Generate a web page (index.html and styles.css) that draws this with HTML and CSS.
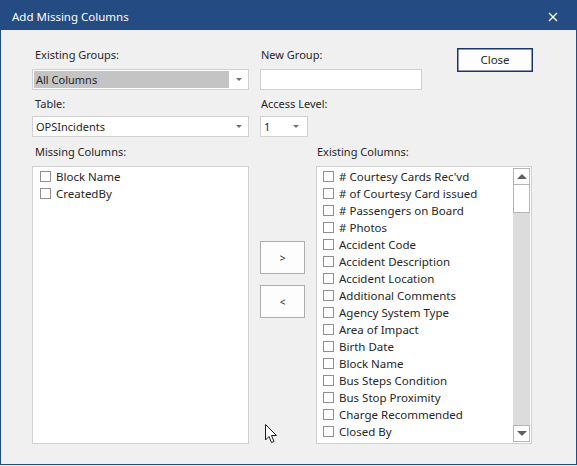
FILE: index.html
```html
<!DOCTYPE html>
<html>
<head>
<meta charset="utf-8">
<link rel="stylesheet" href="styles.css">
</head>
<body>
<div class="window">
  <div class="titlebar">
    <span class="title">Add Missing Columns</span>
    <svg class="close-x" width="10" height="10" viewBox="0 0 10 10"><path d="M1 1 L9 9 M9 1 L1 9" stroke="#fff" stroke-width="1.4" fill="none"/></svg>
  </div>
  <div class="content">
    <div class="top-row">
      <div class="col-left">
        <div class="label l1">Existing Groups:</div>
        <div class="combo">
          <div class="combo-sel">All Columns</div>
          <span class="arrow"></span>
        </div>
        <div class="label l2">Table:</div>
        <div class="combo combo2">
          <div class="combo-text">OPSIncidents</div>
          <span class="arrow"></span>
        </div>
      </div>
      <div class="col-mid">
        <div class="label l1">New Group:</div>
        <div class="textbox"></div>
        <div class="label l2">Access Level:</div>
        <div class="combo combo2 combo-small">
          <div class="combo-text">1</div>
          <span class="arrow"></span>
        </div>
      </div>
      <div class="col-right">
        <button class="close-btn">Close</button>
      </div>
    </div>
    <div class="lists-row">
      <div class="list-col">
        <div class="label l3">Missing Columns:</div>
        <div class="listbox left-list">
          <div class="items">
            <div class="item"><span class="cb"></span>Block Name</div>
            <div class="item"><span class="cb"></span>CreatedBy</div>
          </div>
        </div>
      </div>
      <div class="btn-col">
        <button class="move-btn">&gt;</button>
        <button class="move-btn">&lt;</button>
      </div>
      <div class="list-col right-col">
        <div class="label l3">Existing Columns:</div>
        <div class="listbox right-list">
          <div class="items">
            <div class="item"><span class="cb"></span># Courtesy Cards Rec'vd</div>
            <div class="item"><span class="cb"></span># of Courtesy Card issued</div>
            <div class="item"><span class="cb"></span># Passengers on Board</div>
            <div class="item"><span class="cb"></span># Photos</div>
            <div class="item"><span class="cb"></span>Accident Code</div>
            <div class="item"><span class="cb"></span>Accident Description</div>
            <div class="item"><span class="cb"></span>Accident Location</div>
            <div class="item"><span class="cb"></span>Additional Comments</div>
            <div class="item"><span class="cb"></span>Agency System Type</div>
            <div class="item"><span class="cb"></span>Area of Impact</div>
            <div class="item"><span class="cb"></span>Birth Date</div>
            <div class="item"><span class="cb"></span>Block Name</div>
            <div class="item"><span class="cb"></span>Bus Steps Condition</div>
            <div class="item"><span class="cb"></span>Bus Stop Proximity</div>
            <div class="item"><span class="cb"></span>Charge Recommended</div>
            <div class="item"><span class="cb"></span>Closed By</div>
          </div>
          <div class="scrollbar">
            <div class="sb-btn"><span class="tri-up"></span></div>
            <div class="sb-thumb"></div>
            <div class="sb-track"></div>
            <div class="sb-btn"><span class="tri-down"></span></div>
          </div>
        </div>
      </div>
    </div>
  </div>
  <svg class="cursor" width="14" height="21" viewBox="0 0 14 21">
    <path d="M0.5 0.5 L0.5 16 L4 12.5 L6.5 18.5 L9 17.5 L6.5 11.5 L11.5 11.5 Z" fill="#fff" stroke="#1a1a2e" stroke-width="1" stroke-linejoin="miter"/>
  </svg>
</div>
</body>
</html>
```

FILE: styles.css
```css
html, body {
  margin: 0;
  padding: 0;
  background: #f0f0f0;
}
body {
  width: 577px;
  height: 466px;
  overflow: hidden;
  font-family: "Noto Sans", "Open Sans", sans-serif;
  font-size: 11px;
  color: #262626;
}
.window {
  position: relative;
  width: 577px;
  height: 465px;
  box-sizing: border-box;
  border: 1px solid #244b82;
  border-top: none;
  background: #f0f0f0;
}
.titlebar {
  height: 30px;
  margin: 0 -1px;
  background: #244b82;
  display: flex;
  align-items: center;
  justify-content: space-between;
  padding: 3px 19px 0 12px;
  box-sizing: border-box;
}
.title {
  color: #fff;
  font-size: 11.5px;
  line-height: 16px;
}
.close-x {
  display: block;
  margin-top: 1px;
}
.content {
  padding: 0 0 0 31px;
}
.top-row {
  display: flex;
}
.label {
  height: 16px;
  line-height: 16px;
  padding-left: 3px;
  white-space: nowrap;
}
.l1 { margin-top: 17px; }
.l2 { margin-top: 6px; }
.l3 { margin-top: 7px; }
.col-left {
  width: 217px;
}
.col-left .l1 + .combo { margin-top: 6px; }
.combo {
  position: relative;
  height: 21px;
  box-sizing: border-box;
  border: 1px solid #d0d0d0;
  background: #fff;
  padding: 1px;
}
.combo2 { margin-top: 4px; }
.combo-sel {
  width: 195px;
  height: 17px;
  line-height: 17px;
  background: #c4c4c4;
  padding-left: 2px;
  box-sizing: border-box;
}
.combo-text {
  height: 17px;
  line-height: 17px;
  padding-left: 2px;
}
.arrow {
  position: absolute;
  right: 6px;
  top: 8px;
  width: 0;
  height: 0;
  border-left: 3px solid transparent;
  border-right: 3px solid transparent;
  border-top: 3px solid #707070;
}
.col-mid {
  margin-left: 11px;
  width: 162px;
}
.col-mid .label { padding-left: 1px; }
.textbox {
  margin-top: 6px;
  height: 21px;
  box-sizing: border-box;
  border: 1px solid #d0d0d0;
  background: #fff;
}
.combo-small {
  width: 48px;
}
.combo-small .arrow { right: 8px; }
.col-right {
  margin-left: 35px;
  padding-top: 18px;
}
.close-btn {
  width: 76px;
  height: 24px;
  box-sizing: border-box;
  border: 1px solid #1c3564;
  box-shadow: inset 0 0 0 0.5px #1c3564;
  background: #fdfdfd;
  font-family: inherit;
  font-size: 11.5px;
  color: #262626;
  padding: 0;
  line-height: 20px;
}
.lists-row {
  display: flex;
}
.list-col {
  width: 217px;
}
.listbox {
  margin-top: 6px;
  height: 278px;
  box-sizing: border-box;
  border: 1px solid #d0d0d0;
  background: #fff;
  display: flex;
}
.items {
  flex: 1;
  padding: 1px 0 0 7px;
}
.right-list .items { padding-left: 6px; }
.item {
  height: 17px;
  line-height: 17px;
  display: flex;
  align-items: center;
  white-space: nowrap;
  font-size: 11.5px;
}
.cb {
  width: 11px;
  height: 11px;
  box-sizing: border-box;
  border: 1px solid #8f8f8f;
  background: #fff;
  margin-right: 5px;
  flex: none;
}
.btn-col {
  margin-left: 11px;
  padding-top: 104px;
  display: flex;
  flex-direction: column;
  gap: 11px;
  width: 45px;
}
.move-btn {
  width: 45px;
  height: 33px;
  box-sizing: border-box;
  border: 1px solid #adadad;
  background: #fdfdfd;
  font-family: inherit;
  font-size: 10px;
  color: #262626;
  padding: 0;
}
.right-col {
  margin-left: 11px;
  width: 216px;
}
.right-col .label { padding-left: 1px; }
.scrollbar {
  width: 17px;
  margin: 1px 1px 1px 0;
  display: flex;
  flex-direction: column;
  background: #dcdcdc;
}
.sb-btn {
  height: 17px;
  box-sizing: border-box;
  border: 1px solid #b5b5b5;
  background: #fff;
  display: flex;
  align-items: center;
  justify-content: center;
}
.sb-thumb {
  height: 28px;
  box-sizing: border-box;
  border: 1px solid #b5b5b5;
  border-top: none;
  background: #fff;
}
.sb-track {
  flex: 1;
}
.tri-up {
  width: 0;
  height: 0;
  border-left: 5px solid transparent;
  border-right: 5px solid transparent;
  border-bottom: 5px solid #606060;
}
.tri-down {
  width: 0;
  height: 0;
  border-left: 5px solid transparent;
  border-right: 5px solid transparent;
  border-top: 5px solid #606060;
}
.cursor {
  position: absolute;
  left: 264px;
  top: 424px;
}
```
